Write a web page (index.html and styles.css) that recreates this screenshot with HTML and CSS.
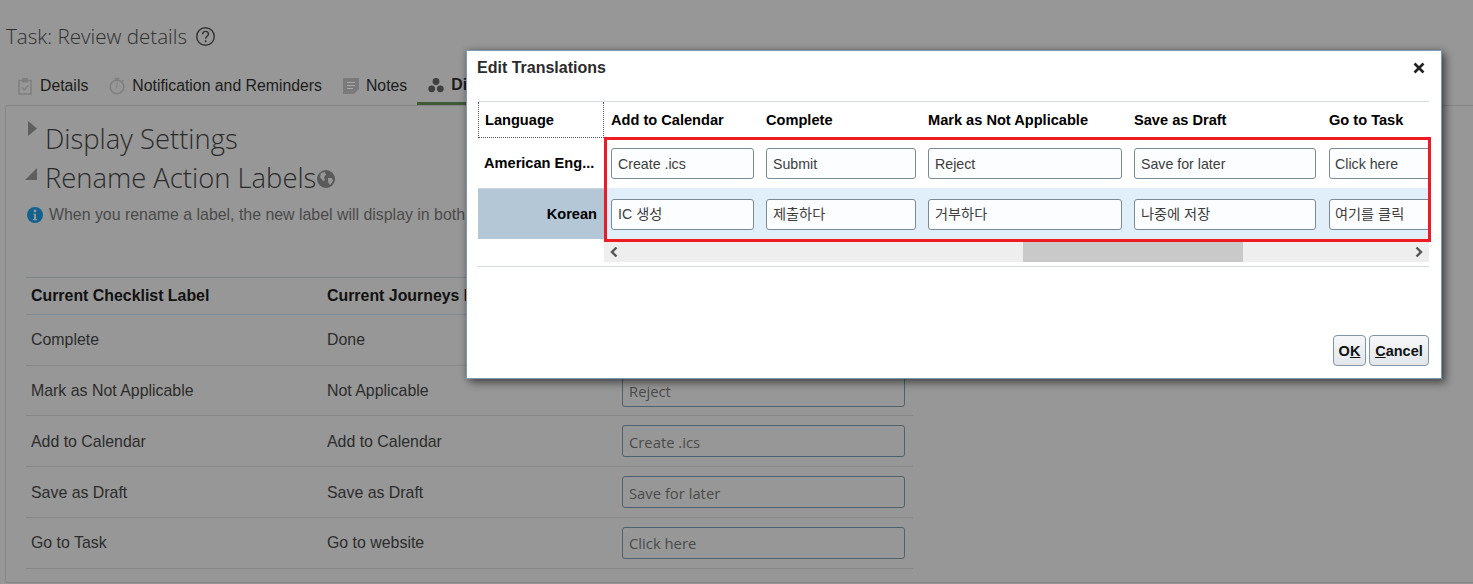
FILE: index.html
```html
<!DOCTYPE html>
<html lang="en">
<head>
<meta charset="utf-8">
<title>Edit Translations</title>
<link rel="stylesheet" href="styles.css">
</head>
<body>
<main class="page">
  <h1 class="task-title">Task: Review details
    <svg class="help" viewBox="0 0 22 22" width="21" height="21"><circle cx="11" cy="11" r="9.200" fill="none" stroke="#333" stroke-width="1.500"/><path d="M8 8.600c0-1.900 1.400-3 3.100-3s3 1.100 3 2.800c0 2.400-3 2.400-3 5" fill="none" stroke="#333" stroke-width="1.500"/><circle cx="11.100" cy="16" r="1" fill="#333"/></svg>
  </h1>
  <nav class="tabs">
    <div class="tab">
      <svg viewBox="0 0 16 18" width="16" height="18"><path d="M2 3.500h12v13.500H2z" fill="none" stroke="#7f7f7f" stroke-width="1.500"/><path d="M5 1h6v4.500H5z" fill="#7f7f7f"/><path d="M5 10.500l2.300 2.300 4-4.300" fill="none" stroke="#7f7f7f" stroke-width="1.300"/></svg>
      <span>Details</span>
    </div>
    <div class="tab">
      <svg viewBox="0 0 16 18" width="16" height="18"><circle cx="8" cy="10" r="6.800" fill="none" stroke="#7f7f7f" stroke-width="1.600"/><path d="M5.500 .8h5v1.800h-5z" fill="#7f7f7f"/><path d="M8 5.500v4.500l-1.500 1.500" fill="none" stroke="#7f7f7f"/><path d="M13 3l1.500 1.500" stroke="#7f7f7f" stroke-width="1.400"/></svg>
      <span>Notification and Reminders</span>
    </div>
    <div class="tab">
      <svg viewBox="0 0 16 16" width="16" height="16"><path d="M0 0h16v11l-5 5H0z" fill="#7a7a7a"/><path d="M4 4.500h8M4 7.500h8M4 10.500h6" stroke="#a8a8a8" stroke-width="1.100"/></svg>
      <span>Notes</span>
    </div>
    <div class="tab tab-active">
      <svg viewBox="0 0 16 16" width="16" height="16"><circle cx="8" cy="4.500" r="3.400" fill="#3f3f3f"/><circle cx="3.700" cy="11.800" r="3.400" fill="#3f3f3f"/><circle cx="12.300" cy="11.800" r="3.400" fill="#3f3f3f"/></svg>
      <span>Display</span>
    </div>
  </nav>
  <section class="panel">
    <h2 class="section-head">
      <svg class="disclosure" viewBox="0 0 9 15" width="9" height="15"><path d="M0 0l9 7.500-9 7.500z" fill="#5f5f5f"/></svg>
      Display Settings
    </h2>
    <h2 class="section-head">
      <svg class="disclosure disclosure-open" viewBox="0 0 12 12" width="12" height="12"><path d="M12 0v12H0z" fill="#5f5f5f"/></svg>
      Rename Action Labels<svg class="globe" viewBox="0 0 18 18" width="18" height="18"><circle cx="9" cy="9" r="9" fill="#5a5a5a"/><path d="M4 3l4-1 1 3-2 2 1 3-2 1-3-4zM11 8l4 0 1 3-3 4-2-3z" fill="#979797"/></svg>
    </h2>
    <p class="note">
      <svg viewBox="0 0 16 16" width="16" height="16"><circle cx="8" cy="8" r="8" fill="#13618f"/><circle cx="8" cy="4" r="1.400" fill="#979797"/><path d="M6.500 6.800h2.500v5.200h1v1.200h-4v-1.200h1v-4h-.5z" fill="#979797"/></svg>
      <span>When you rename a label, the new label will display in both</span>
    </p>
    <div class="labels">
      <div class="labels-row labels-head"><span>Current Checklist Label</span><span>Current Journeys Label</span><span></span></div>
      <div class="labels-row row-tall"><span>Complete</span><span>Done</span><span class="field"></span></div>
      <div class="labels-row row-short"><span>Mark as Not Applicable</span><span>Not Applicable</span><span class="field">Reject</span></div>
      <div class="labels-row row-tall row-low"><span>Add to Calendar</span><span>Add to Calendar</span><span class="field">Create .ics</span></div>
      <div class="labels-row row-tall row-low"><span>Save as Draft</span><span>Save as Draft</span><span class="field">Save for later</span></div>
      <div class="labels-row row-tall"><span>Go to Task</span><span>Go to website</span><span class="field">Click here</span></div>
    </div>
  </section>
</main>

<div class="overlay-dialog" role="dialog">
  <header class="dialog-head">
    <h3>Edit Translations</h3>
    <svg viewBox="0 0 12 12" width="12" height="12"><path d="M1.500 1.500l9 9M10.500 1.500l-9 9" stroke="#222" stroke-width="2.600"/></svg>
  </header>
  <div class="grid-wrap">
    <div class="lang-col">
      <div class="lang-head">Language</div>
      <div class="lang lang-first">American Eng...</div>
      <div class="lang lang-selected">Korean</div>
    </div>
    <div class="data-col">
      <div class="data-row data-head"><span>Add to Calendar</span><span>Complete</span><span>Mark as Not Applicable</span><span>Save as Draft</span><span>Go to Task</span></div>
      <div class="data-row data-first">
        <span class="tfield w1">Create .ics</span><span class="tfield w2">Submit</span><span class="tfield w3">Reject</span><span class="tfield w4">Save for later</span><span class="tfield w5">Click here</span>
      </div>
      <div class="data-row data-selected">
        <span class="tfield w1">IC 생성</span><span class="tfield w2">제출하다</span><span class="tfield w3">거부하다</span><span class="tfield w4">나중에 저장</span><span class="tfield w5">여기를 클릭</span>
      </div>
      <div class="scrollbar">
        <svg viewBox="0 0 8 12" width="8" height="12"><path d="M6.500 1.500L2 6l4.500 4.500" fill="none" stroke="#555" stroke-width="2.400"/></svg>
        <div class="track"><div class="thumb"></div></div>
        <svg viewBox="0 0 8 12" width="8" height="12"><path d="M1.500 1.500L6 6l-4.500 4.500" fill="none" stroke="#555" stroke-width="2.400"/></svg>
      </div>
    </div>
    <div class="highlight"></div>
  </div>
  <footer class="dialog-foot">
    <button class="btn btn-ok">O<u>K</u></button>
    <button class="btn btn-cancel"><u>C</u>ancel</button>
  </footer>
</div>
</body>
</html>
```

FILE: styles.css
```css
* { box-sizing: border-box; }
html, body { margin: 0; height: 584px; overflow: hidden; background: #979797; }
body { font-family: "Liberation Sans", Arial, sans-serif; font-size: 15.900px; color: #2c2c2c; }

.page { padding: 22px 0 0 5px; height: 584px; }

.task-title {
  margin: 0 0 0 1px; height: 28px; display: flex; align-items: center; gap: 7px;
  font: 300 20.600px/28px "Open Sans", sans-serif; color: #2f2f2f;
}
.help { margin-left: 1px; }

.tabs { display: flex; height: 41px; margin-top: 14px; padding-left: 1px; }
.tab { display: flex; align-items: center; gap: 7px; padding: 3px 10px 0 11px; height: 41px; color: #1c1c1c; font-size: 15.800px; }
.tab-active { font-weight: 700; border-bottom: 3px solid #3f5a34; padding: 3px 60px 0 11px; }

.panel {
  height: 478px; padding: 13px 0 0 20px;
  border: 1px solid #858585; border-right: 0; border-radius: 3px 0 0 3px;
}
.section-head {
  position: relative; margin: 0; height: 39px; padding-left: 19px; display: flex; align-items: center;
  font: 300 27.400px/39px "Open Sans", sans-serif; color: #2b2b2b; white-space: nowrap;
}
.disclosure { position: absolute; left: 2px; top: 2px; }
.disclosure-open { left: -1px; top: 10px; }
.globe { margin-left: 1px; margin-top: 2px; }

.note { margin: 8px 0 0 1px; height: 20px; display: flex; align-items: center; gap: 6px; color: #4a4a4a; white-space: nowrap; }
.note svg { flex: none; }

.labels { margin-top: 52px; width: 887px; }
.labels-row { display: grid; grid-template-columns: 296px 295px 296px; align-items: center; border-bottom: 1px solid #878787; }
.labels-row > span { padding-left: 5px; }
.labels-head { height: 38px; border-top: 1px solid #7c8487; border-bottom-color: #7f8b94; font-weight: 700; color: #111; }
.row-tall { height: 51px; }
.row-short { height: 50px; }
.row-low > span { padding-top: 2px; }
.labels-row > .field {
  display: block; width: 283px; height: 32px; margin-left: 5px; padding: 0 0 0 6px;
  border: 1px solid #4d626c; border-radius: 3px;
  font: 14.800px/31px "Open Sans", sans-serif; color: #4a4a4a;
}
.row-low > .field { line-height: 32px; }

.overlay-dialog {
  position: absolute; left: 466px; top: 50px; width: 976px; height: 329px;
  display: flex; flex-direction: column;
  background: #fff; border: 1px solid #7a9ab5;
  box-shadow: 4px 4px 8px rgba(0, 0, 0, .45), 0 0 6px rgba(0, 0, 0, .25);
  padding: 0 12px 0 11px;
}
.dialog-head { height: 50px; display: flex; justify-content: space-between; align-items: flex-start; }
.dialog-head h3 { margin: 7px 0 0 -1px; font: 700 16px/20px "Liberation Sans", sans-serif; color: #2b2b2b; }
.dialog-head svg { margin: 11px 4px 0 0; }

.grid-wrap {
  position: relative; display: flex; height: 166px;
  border-top: 1px solid #d5dee6; border-bottom: 1px solid #d5dee6;
}
.lang-col { width: 126px; flex: none; font-weight: 700; font-size: 14.600px; color: #000; }
.lang-head { height: 36px; padding-left: 6px; line-height: 37px; border: 1px dotted #555; border-top: 0; }
.lang { height: 50px; line-height: 51px; text-align: right; padding-right: 7px; white-space: nowrap; }
.lang-first { text-align: left; padding-left: 6px; }
.lang-selected { height: 51px; background: #b3c7d7; border-top: 1px solid #c9d5df; }

.data-col { width: 825px; flex: none; overflow: hidden; }
.data-row { display: grid; grid-template-columns: 155px 162px 206px 195px 150px; padding-left: 7px; width: 885px; }
.data-head { height: 36px; align-items: center; font-weight: 700; font-size: 14.600px; color: #000; }
.data-first { height: 50px; padding-top: 10px; }
.data-selected { height: 51px; padding-top: 11px; background: #e1effb; }
.tfield {
  height: 31px; padding-left: 6px; border: 1px solid #7a8b97; border-radius: 3px; background: #fbfdff;
  font: 14.200px/29px "Liberation Sans", "Noto Sans CJK KR", sans-serif; color: #3d3d3d; white-space: nowrap;
}
.data-first .tfield { line-height: 31px; }
.w1 { width: 143px; } .w2 { width: 150px; } .w3 { width: 194px; } .w4 { width: 182px; } .w5 { width: 150px; padding-left: 5px; }

.scrollbar { display: flex; align-items: center; height: 21px; margin-top: 2px; background: #eee; padding: 0 6px; }
.track { flex: 1; height: 21px; }
.thumb { width: 220px; height: 21px; margin-left: 405px; background: #c9c9c9; }

.highlight { position: absolute; left: 126px; top: 35px; width: 827px; height: 105px; border: 3px solid #ed1c24; }

.dialog-foot { display: flex; justify-content: flex-end; gap: 3px; margin-top: 68px; }
.btn {
  height: 31px; padding: 0; border: 1px solid #7f95a8; border-radius: 4px;
  background: linear-gradient(#f6f7f8, #e2e6ea);
  font: 700 14.500px "Liberation Sans", sans-serif; color: #111;
}
.btn-ok { width: 33px; }
.btn-cancel { width: 60px; }
```
